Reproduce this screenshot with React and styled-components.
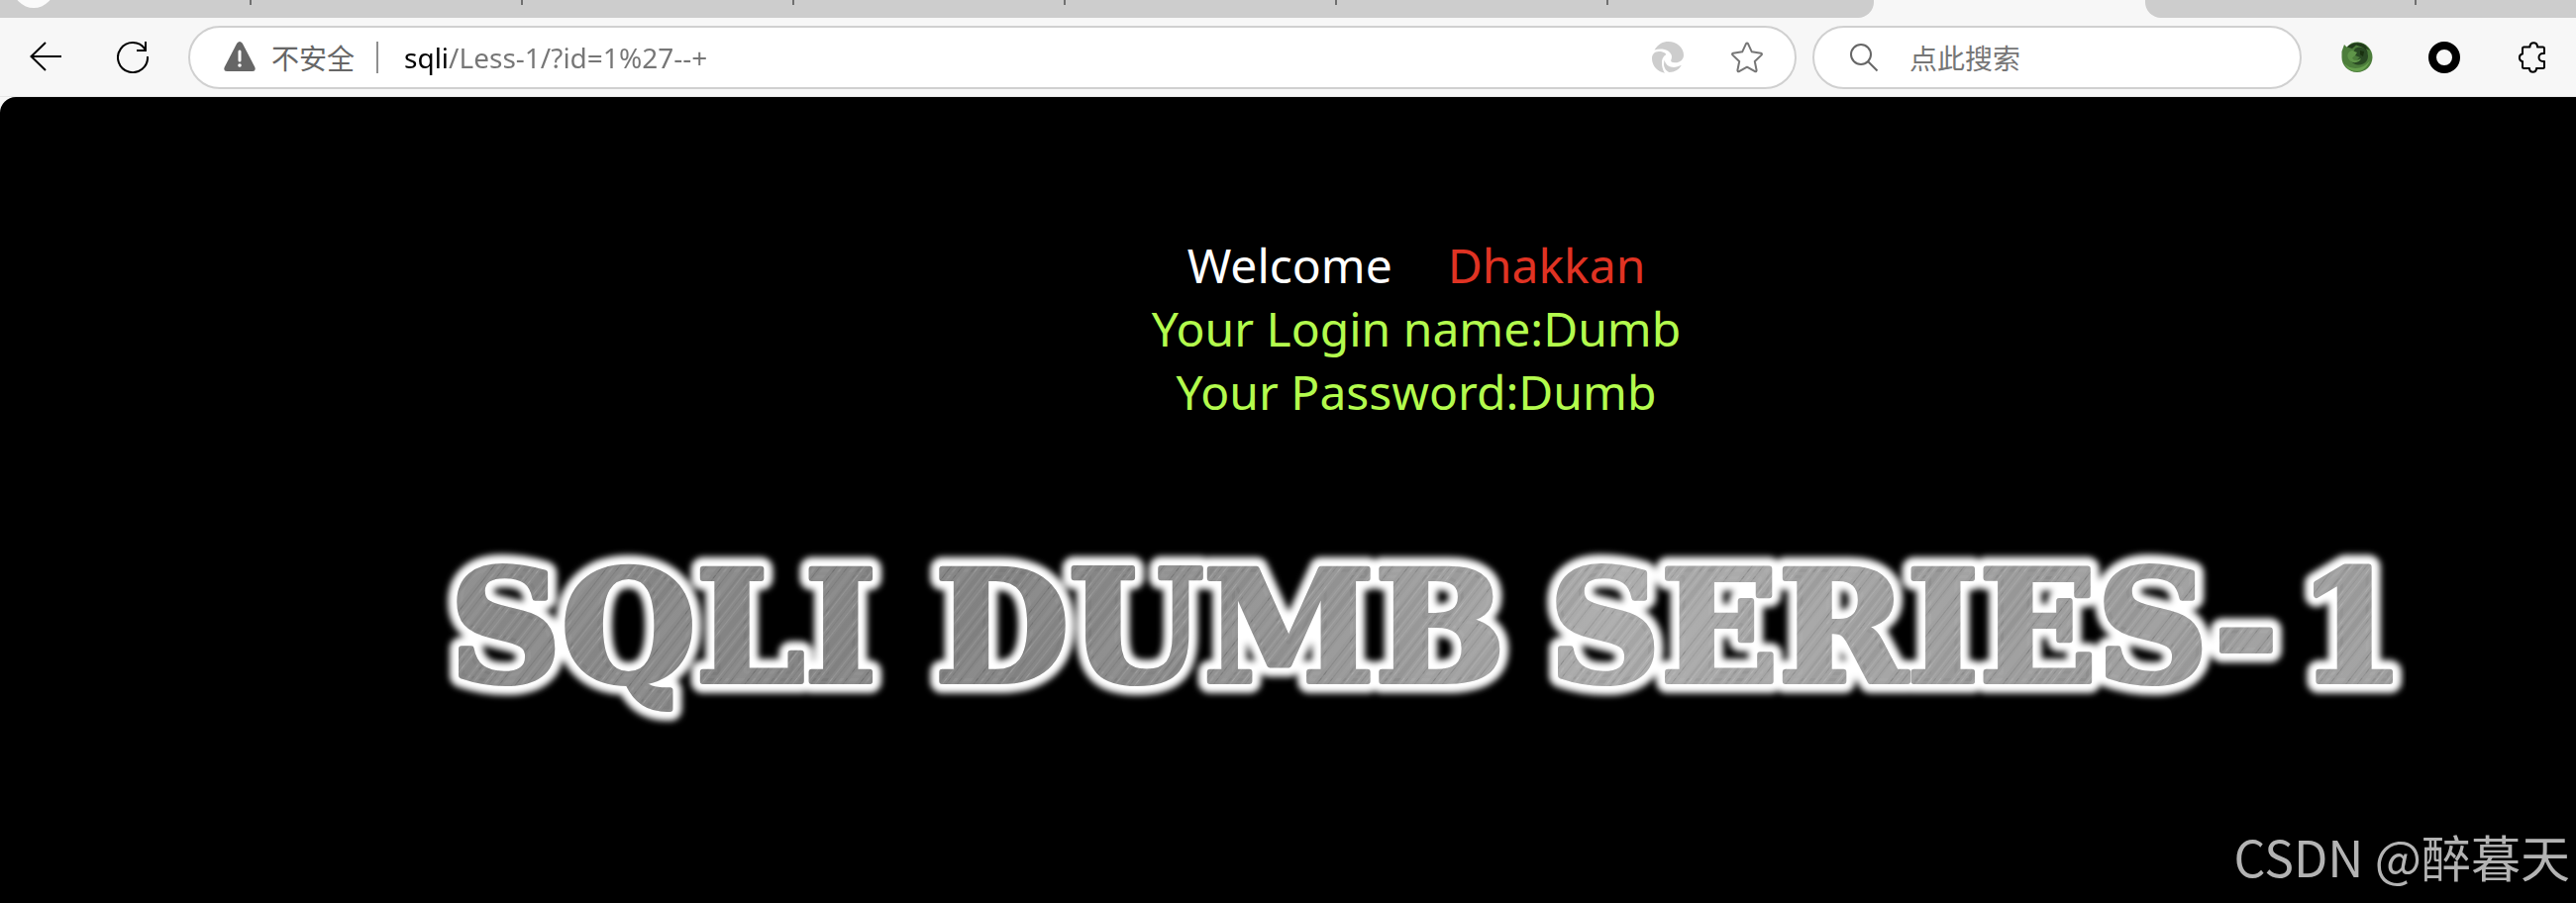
import React from 'react';
import styled, {createGlobalStyle} from 'styled-components';

const GlobalStyle = createGlobalStyle`
  * {
    box-sizing: border-box;
  }

  body {
    margin: 0;
    background: #f7f7f7;
    font-family: 'Noto Sans', 'Noto Sans CJK SC', sans-serif;
  }
`;

const Window = styled.div`
  display: flex;
  flex-direction: column;
  min-height: 100vh;
  overflow: hidden;
`;

const TabStrip = styled.div`
  display: flex;
  height: 18px;
  overflow: hidden;
`;

const TabGroup = styled.div`
  display: flex;
  flex: ${props => (props.$grow ? '1' : 'none')};
  background: #cdcdcd;
  border-radius: ${props => (props.$grow ? '0 0 0 16px' : '0 0 16px 0')};
`;

const Tab = styled.div`
  width: ${props => props.$width || 274}px;
  height: 5px;
  border-right: ${props => (props.$last ? 'none' : '2px solid #707070')};
`;

const ActiveTab = styled.div`
  width: 274px;
`;

const ProfileDot = styled.div`
  width: 42px;
  height: 42px;
  margin: -34px 0 0 13px;
  border-radius: 50%;
  background: #fafafa;
`;

const Toolbar = styled.div`
  display: flex;
  align-items: center;
  height: 80px;
  padding: 0 29px 0 30px;
  border-bottom: 1px solid #e8e8e8;
`;

const ButtonGroup = styled.div`
  display: flex;
  gap: 56px;
`;

const IconButton = styled.button`
  display: flex;
  padding: 0;
  border: none;
  background: none;
  color: ${props => props.$color || '#000'};
  cursor: pointer;
`;

const Field = styled.div`
  display: flex;
  align-items: center;
  flex: ${props => (props.$width ? 'none' : '1')};
  width: ${props => (props.$width ? props.$width + 'px' : 'auto')};
  height: 64px;
  margin-left: ${props => props.$gap}px;
  padding: 0 32px 0 34px;
  border: 2px solid #d0d0d0;
  border-radius: 32px;
  background: #fff;
  color: #666;
`;

const Security = styled.button`
  display: flex;
  align-items: center;
  gap: 16px;
  height: 32px;
  padding: 0 22px 0 0;
  border: none;
  border-right: 2px solid #8f8f8f;
  background: none;
  color: #666;
  font-family: 'Noto Sans CJK SC', sans-serif;
  font-size: 28px;
  line-height: 32px;
`;

const TextInput = styled.input`
  flex: 1;
  min-width: 0;
  height: 40px;
  padding: 0;
  border: none;
  outline: none;
  background: none;
  font-size: 28px;
`;

// the host part is black, the rest of the address is grey
const UrlInput = styled(TextInput)`
  margin-left: 26px;
  background: linear-gradient(to right, #000 45px, #767676 45px);
  background-clip: text;
  -webkit-text-fill-color: transparent;
  font-family: 'Noto Sans', sans-serif;
`;

const SearchInput = styled(TextInput)`
  margin-left: 30px;
  font-family: 'Noto Sans CJK SC', sans-serif;

  &::placeholder {
    color: #767676;
    opacity: 1;
  }
`;

const FieldActions = styled.div`
  display: flex;
  gap: 48px;
`;

const Extensions = styled(ButtonGroup)`
  margin-left: 40px;
`;

const Page = styled.main`
  position: relative;
  flex: 1;
  padding: 138px 0 0 260px;
  border-top-left-radius: 16px;
  background: #000;
`;

const Content = styled.div`
  display: flex;
  flex-direction: column;
  align-items: center;
  width: 2340px;
`;

const Line = styled.p`
  display: flex;
  gap: 56px;
  margin: 0;
  color: ${props => props.$color || '#fff'};
  font-size: 48px;
  line-height: 64px;
`;

const Red = styled.span`
  color: #e03323;
`;

const Banner = styled.svg`
  display: block;
  margin-top: 114px;
`;

const Watermark = styled.div`
  position: absolute;
  right: 6px;
  bottom: 12px;
  color: #b3b3b3;
  font-family: 'Noto Sans CJK SC', sans-serif;
  font-size: 50px;
  line-height: 72px;
`;

const Icon = ({children}) => (
    <svg width="32" height="32" viewBox="0 0 32 32" fill="none"
         stroke="currentColor" strokeWidth="2" aria-hidden="true">
        {children}
    </svg>
);

const BackIcon = () => (
    <Icon><path d="M32 15H1.5M16 1L1.5 15L16 29"/></Icon>
);

const ReloadIcon = () => (
    <Icon><path d="M31 15A15 15 0 1 1 28.4 7.600M29 0V9H20"/></Icon>
);

const WarningIcon = () => (
    <Icon>
        <path d="M13.2 1.8Q16 -1.6 18.8 1.8L31.4 26Q32.6 29.8 29 30H3Q-0.6 29.8 0.6 26Z" fill="currentColor" stroke="none"/>
        <path d="M16 10V19" stroke="#fff" strokeWidth="3" strokeLinecap="round"/>
        <circle cx="16" cy="24" r="1.8" fill="#fff" stroke="none"/>
    </Icon>
);

const SwirlIcon = () => (
    <Icon>
        <g fill="currentColor" stroke="none">
            <path d="M2.5 8.5C6 2.5 11 0 16.5 0C25 0 32 6 32 13.5C32 18.5 28 21.5 23 21.3C20 21.2 18.5 20 19.3 18.5C21 15 19.5 11.5 16 9.3C12 7 7 7 2.5 8.5Z"/>
            <path d="M0 17C0 12.5 3 9.7 7.5 10C11 10.2 14 11.5 14.3 13C11 15 9.5 18.5 10 23C10.3 26.5 11.3 29.5 13 31.8C5.5 30.5 0 24.5 0 17Z"/>
            <path d="M12.5 18.8C13.5 22.5 16 25.2 20 25.8C23.5 26.2 27 25.3 29.8 23.8C27.5 28 23 31 17.5 31C14.5 30 12 26.5 12 23Z"/>
        </g>
    </Icon>
);

const StarIcon = () => (
    <Icon>
        <path strokeLinejoin="round" d="M15 2.2Q16 .8 17 2.2L20.8 10.3L30 11.7Q31.6 12.3 30.5 13.6L23.8 20L25.6 29Q25.6 30.6 24 30.2L16 25.7L8 30.2Q6.4 30.6 6.4 29L8.2 20L1.5 13.6Q.4 12.3 2 11.7L11.2 10.3Z"/>
    </Icon>
);

const SearchIcon = () => (
    <Icon>
        <circle cx="13" cy="13" r="10"/>
        <path d="M20 20L29.500 29.500"/>
    </Icon>
);

const GreenFoxIcon = () => (
    <Icon>
        <g stroke="none">
            <path d="M0.5 10L3 3L5.5 5.5C9 1.5 13 .3 17 .5C25 1 31.7 8 31.5 16C31.2 24.500 24.500 31 16 31C7 31 .5 24 .5 16Z" fill="#4c7d3b"/>
            <path d="M6 5.500C10 1 18 -.5 24 3.500L29 9L25 7L27 12L22 6L15 3.500L11 7Z" fill="#213a1b"/>
            <path d="M14 7C19 3.500 27 7 27 14.500C27 20 23 23.500 18 23.500C14 23.500 10 21.500 9 18L15 19L19 16L14 14L12 11Z" fill="#294923"/>
            <path d="M11 9L16 11L14 14L11 16.500C13 19.500 16 19 20 17C18.500 22 10 23 7 17C5.500 13 7 10 11 9Z" fill="#5f9549"/>
            <path d="M3 22C9 29 22 29 29 19C26 27 21 30 16 30C10 30 5.500 27 3 22Z" fill="#67a04e"/>
            <path d="M19 9L23 10L22 15L19 13Z" fill="#18300f"/>
        </g>
    </Icon>
);

const RingIcon = () => (
    <Icon><circle cx="16" cy="16" r="12" strokeWidth="8"/></Icon>
);

const PuzzleIcon = () => (
    <Icon>
        <path strokeLinejoin="round" d="M8.500 5.500H14.500V4.500A3.800 3.800 0 0 1 22 4.500V5.500H27.500Q29 5.500 29 7V12H27.500A4 4 0 0 0 27.500 20H29V25.500Q29 27 27.500 27H21V28A3.600 3.600 0 0 1 14 28V27H8.500Q7 27 7 25.500V20H6.500A4 4 0 0 1 6.500 12.500H7V7Q7 5.500 8.500 5.500Z"/>
    </Icon>
);

// [offset, width, opacity] of the brushed metal scratches
const scratches = [
    [0, 2, .05], [3, 1, .1], [7, 4, .04], [12, 1, .08], [15, 1, .06],
    [19, 1, .1], [22, 6, .04], [30, 1, .08], [33, 2, .06], [37, 1, .08],
    [40, 5, .05], [47, 1, .1], [50, 1, .06], [54, 3, .05], [59, 1, .08],
    [62, 7, .04], [72, 1, .1], [76, 2, .06], [81, 1, .08], [85, 4, .04]
];

const TitleBanner = () => (
    <Banner width="2000" height="200" viewBox="0 0 2000 200" role="img" aria-label="SQLI DUMB SERIES-1">
        <defs>
            <linearGradient id="metal" gradientUnits="userSpaceOnUse" x1="0" y1="0" x2="2000" y2="0">
                <stop offset="0" stopColor="#8c8c8c"/>
                <stop offset=".3" stopColor="#868686"/>
                <stop offset=".46" stopColor="#989898"/>
                <stop offset=".6" stopColor="#adadad"/>
                <stop offset=".8" stopColor="#9d9d9d"/>
                <stop offset="1" stopColor="#a0a0a0"/>
            </linearGradient>
            <pattern id="brushed" width="91" height="200" patternUnits="userSpaceOnUse" patternTransform="rotate(38)">
                {scratches.map(([x, width, opacity], i) => (
                    <rect key={x} x={x} width={width} height="200" fill={i % 2 ? '#fff' : '#000'} opacity={opacity}/>
                ))}
            </pattern>
            <filter id="glow" x="-5%" y="-30%" width="110%" height="160%">
                <feGaussianBlur stdDeviation="3"/>
            </filter>
            <g id="words" fontFamily="'DejaVu Serif', serif" fontWeight="700" fontSize="156" strokeLinejoin="round">
                <text x="24" y="146">SQLI</text>
                <text x="514" y="146">DUMB</text>
                <text x="1134" y="146">SERIES-</text>
                <text x="1890" y="146">1</text>
            </g>
        </defs>
        <use href="#words" fill="#fff" stroke="#fff" strokeWidth="24" filter="url(#glow)"/>
        <use href="#words" fill="url(#metal)" stroke="url(#metal)" strokeWidth="6"/>
        <use href="#words" fill="url(#brushed)" stroke="url(#brushed)" strokeWidth="6"/>
    </Banner>
);

class App extends React.Component {

    render() {
        return (
            <Window>
                <GlobalStyle/>

                <TabStrip>
                    <TabGroup>
                        <Tab $width={254}><ProfileDot/></Tab>
                        <Tab/>
                        <Tab/>
                        <Tab/>
                        <Tab/>
                        <Tab/>
                        <Tab $last $width={268}/>
                    </TabGroup>
                    <ActiveTab/>
                    <TabGroup $grow>
                        <Tab/>
                    </TabGroup>
                </TabStrip>

                <Toolbar>
                    <ButtonGroup>
                        <IconButton aria-label="Back"><BackIcon/></IconButton>
                        <IconButton aria-label="Reload"><ReloadIcon/></IconButton>
                    </ButtonGroup>

                    <Field $gap={40}>
                        <Security><WarningIcon/>不安全</Security>
                        <UrlInput type="text" aria-label="Address" defaultValue="sqli/Less-1/?id=1%27--+"/>
                        <FieldActions>
                            <IconButton aria-label="Assistant" $color="#cdcdcd"><SwirlIcon/></IconButton>
                            <IconButton aria-label="Favorite" $color="#767676"><StarIcon/></IconButton>
                        </FieldActions>
                    </Field>

                    <Field $gap={16} $width={494}>
                        <SearchIcon/>
                        <SearchInput type="text" aria-label="Search" placeholder="点此搜索"/>
                    </Field>

                    <Extensions>
                        <IconButton aria-label="Green fox"><GreenFoxIcon/></IconButton>
                        <IconButton aria-label="Ring"><RingIcon/></IconButton>
                        <IconButton aria-label="Extensions"><PuzzleIcon/></IconButton>
                    </Extensions>
                </Toolbar>

                <Page>
                    <Content>
                        <Line>
                            <span>Welcome</span>
                            <Red>Dhakkan</Red>
                        </Line>
                        <Line $color="#b3fb4d">Your Login name:Dumb</Line>
                        <Line $color="#b3fb4d">Your Password:Dumb</Line>
                        <TitleBanner/>
                    </Content>
                    <Watermark>CSDN @醉暮天</Watermark>
                </Page>
            </Window>
        );
    }

}

export default App;
